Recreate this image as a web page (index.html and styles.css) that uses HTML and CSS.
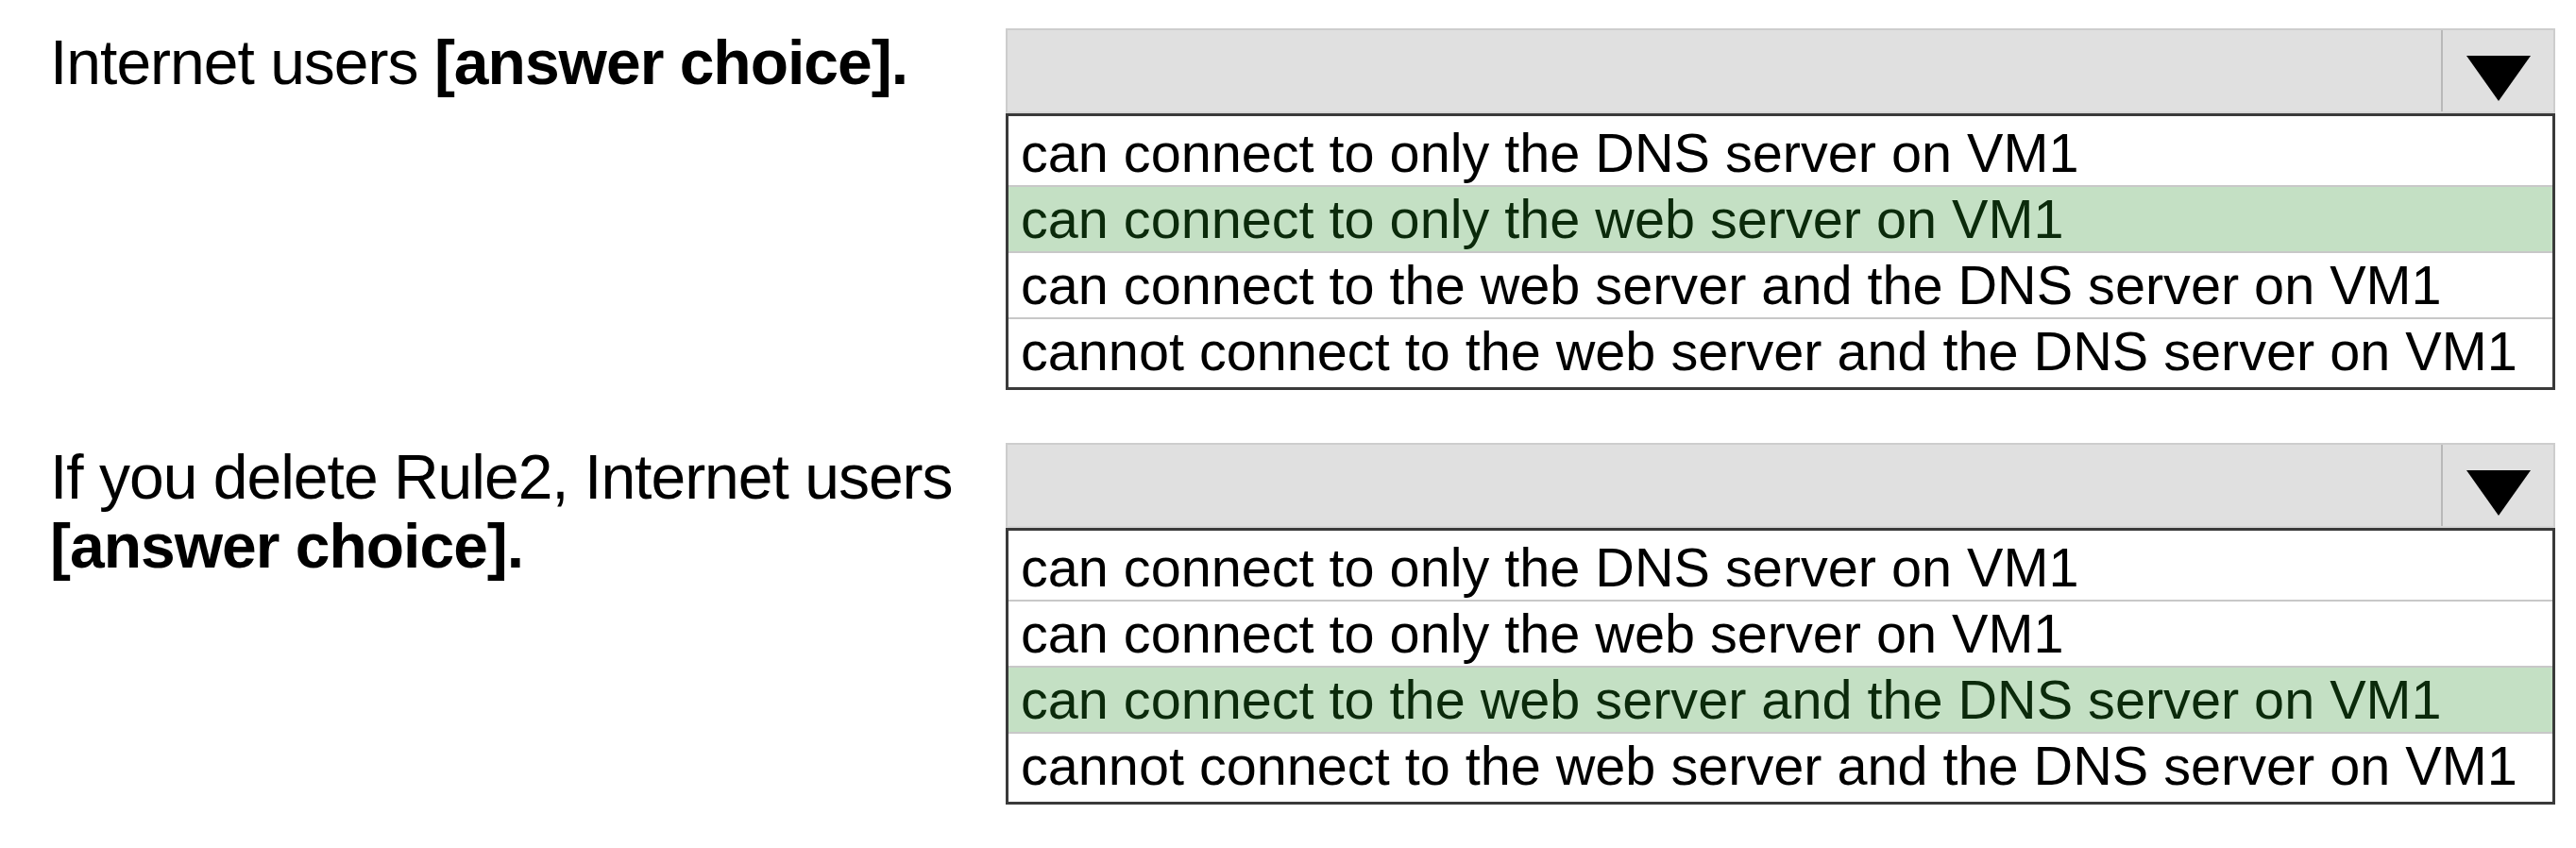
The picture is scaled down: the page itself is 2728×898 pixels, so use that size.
FILE: index.html
```html
<!DOCTYPE html>
<html lang="en">
<head>
<meta charset="utf-8">
<title>Answer choices</title>
<link rel="stylesheet" href="styles.css">
</head>
<body>
<div class="page">
  <div class="question">
    <div class="label">Internet users <b>[answer choice].</b></div>
    <div class="dropdown">
      <div class="select">
        <div class="select-value"></div>
        <div class="select-arrow"><span class="triangle"></span></div>
      </div>
      <ul class="options">
        <li>can connect to only the DNS server on VM1</li>
        <li class="correct">can connect to only the web server on VM1</li>
        <li>can connect to the web server and the DNS server on VM1</li>
        <li>cannot connect to the web server and the DNS server on VM1</li>
      </ul>
    </div>
  </div>
  <div class="question">
    <div class="label">If you delete Rule2, Internet users <b>[answer choice].</b></div>
    <div class="dropdown">
      <div class="select">
        <div class="select-value"></div>
        <div class="select-arrow"><span class="triangle"></span></div>
      </div>
      <ul class="options">
        <li>can connect to only the DNS server on VM1</li>
        <li>can connect to only the web server on VM1</li>
        <li class="correct">can connect to the web server and the DNS server on VM1</li>
        <li>cannot connect to the web server and the DNS server on VM1</li>
      </ul>
    </div>
  </div>
</div>
</body>
</html>
```

FILE: styles.css
```css
html, body {
  margin: 0;
  padding: 0;
  background: #ffffff;
}

body {
  font-family: "Liberation Sans", Arial, sans-serif;
  color: #000000;
}

.page {
  display: flex;
  flex-direction: column;
  gap: 56px;
  padding: 30px 0 0 53px;
}

.question {
  display: grid;
  grid-template-columns: 1012px 1641px;
  align-items: start;
}

.label {
  font-size: 66px;
  line-height: 73px;
  letter-spacing: -1px;
  width: 980px;
}

.label b {
  font-weight: bold;
}

.dropdown {
  display: flex;
  flex-direction: column;
}

.select {
  display: flex;
  height: 86px;
  background: #e0e0e0;
  border: 2px solid #cdcdcd;
  border-bottom-color: #d6d6d6;
}

.select-value {
  flex: 1;
}

.select-arrow {
  width: 117px;
  border-left: 2px solid #b9b9b9;
  display: flex;
  align-items: center;
  justify-content: center;
}

.triangle {
  width: 0;
  height: 0;
  border-left: 34px solid transparent;
  border-right: 34px solid transparent;
  border-top: 48px solid #000000;
  margin-top: 16px;
}

.options {
  list-style: none;
  margin: 0;
  padding: 5px 0 4px;
  border: 3px solid #3a3a3a;
  background: #ffffff;
}

.options li {
  height: 68px;
  line-height: 68px;
  padding-left: 13px;
  font-size: 57.6px;
  white-space: nowrap;
  border-bottom: 2px solid #c8c8c8;
}

.options li:last-child {
  border-bottom: none;
}

.options li.correct {
  background: #c4e0c4;
  color: #0b2a0b;
}
```
